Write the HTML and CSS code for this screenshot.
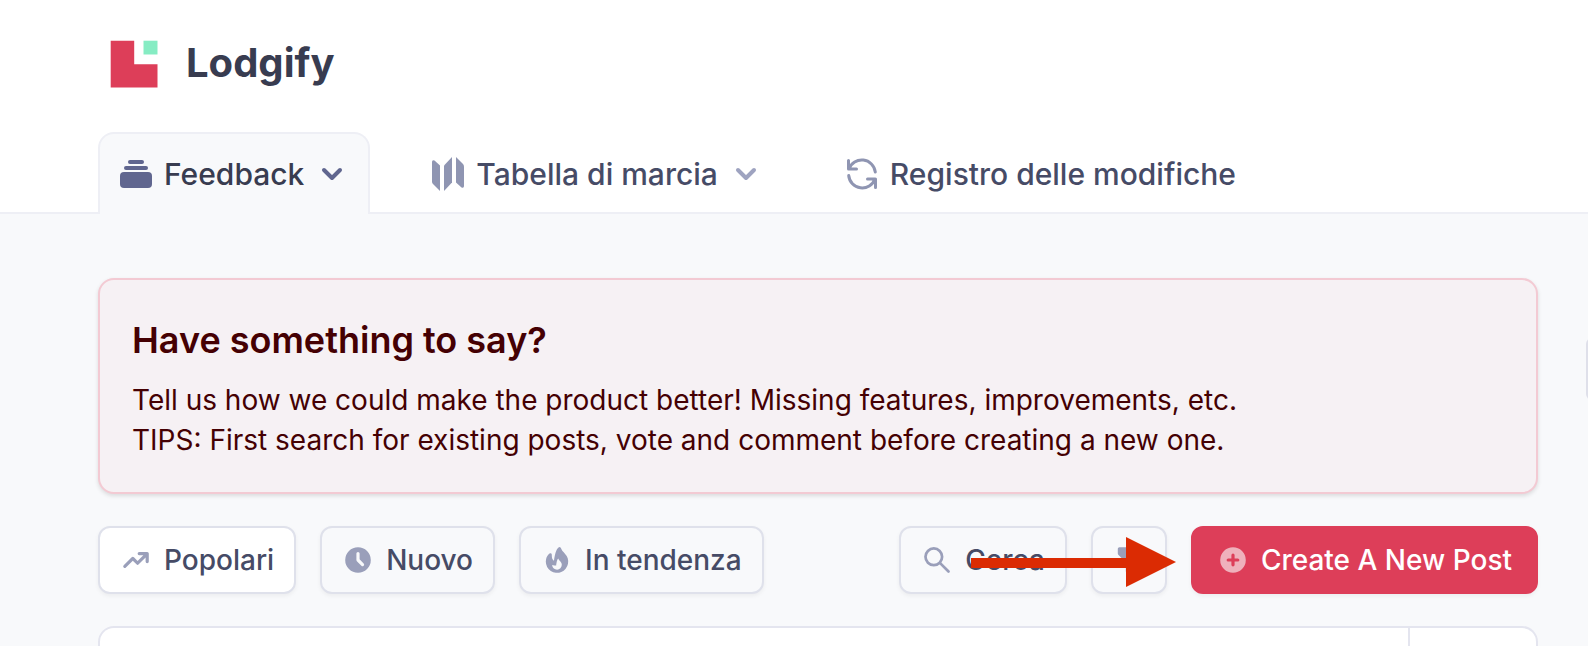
FILE: index.html
```html
<!DOCTYPE html>
<html lang="it">
<head>
    <meta charset="utf-8">
    <meta name="viewport" content="width=device-width, initial-scale=1">
    <link rel="stylesheet" href="styles.css">
    <title>Lodgify Feedback</title>
</head>

<body>
<header class="header">
    <a class="brand" href="#">
        <svg class="logo" viewBox="0 0 48 48" aria-hidden="true">
            <path fill="#dd3e59" d="M.7.7h23.500v23.500h23.300v23.300H.7z"/>
            <path fill="#86ecc3" d="M33.500.7h14v13.800h-14z"/>
        </svg>
        <span>Lodgify</span>
    </a>
    <nav class="tabs">
        <a class="tab active" href="#">
            <svg class="icon" viewBox="0 0 32 32" aria-hidden="true">
                <rect x="8" y="2" width="16" height="4" rx="2"/>
                <rect x="4" y="8" width="24" height="4" rx="2"/>
                <rect x="0" y="14" width="32" height="16" rx="4"/>
            </svg>
            <span>Feedback</span>
            <svg class="icon chevron" viewBox="0 0 32 32" aria-hidden="true"><path d="M8 12l8 8 8-8"/></svg>
        </a>
        <a class="tab" href="#">
            <svg class="icon" viewBox="0 0 32 32" aria-hidden="true">
                <path d="M0 4Q0 1.500 2.500 2.500L8 7.500V33l-7-7q-1-1-1-2.500z"/>
                <path d="M12 7.500l8-8.500v25.500L12 33z"/>
                <path d="M24-1l7 7q1 1 1 2.500V28q0 2.500-2.500 1.500L24 24.500z"/>
            </svg>
            <span>Tabella di marcia</span>
            <svg class="icon chevron" viewBox="0 0 32 32" aria-hidden="true"><path d="M8 12l8 8 8-8"/></svg>
        </a>
        <a class="tab" href="#">
            <svg class="icon line" viewBox="0 0 32 32" aria-hidden="true">
                <path d="M2.500 2.500v8.500h8M3 11A13.600 13.600 0 0 1 29.300 14M29.500 29.500V21h-8M29 21A13.600 13.600 0 0 1 2.700 17.500"/>
            </svg>
            <span>Registro delle modifiche</span>
        </a>
    </nav>
</header>

<main class="content">
    <section class="banner">
        <h1>Have something to say?</h1>
        <p>Tell us how we could make the product better! Missing features, improvements, etc.<br>TIPS: First search for existing posts, vote and comment before creating a new one.</p>
    </section>

    <div class="toolbar">
        <div class="group">
            <button class="btn selected" type="button">
                <svg class="icon" viewBox="0 0 20 20" aria-hidden="true"><path d="M12 7a1 1 0 110-2h5a1 1 0 011 1v5a1 1 0 11-2 0V8.414l-4.293 4.293a1 1 0 01-1.414 0L8 10.414l-4.293 4.293a1 1 0 01-1.414-1.414l5-5a1 1 0 011.414 0L11 10.586 14.586 7H12z"/></svg>
                Popolari
            </button>
            <button class="btn" type="button">
                <svg class="icon" viewBox="0 0 20 20" aria-hidden="true"><path fill-rule="evenodd" d="M10 18a8 8 0 100-16 8 8 0 000 16zm1-12a1 1 0 10-2 0v4a1 1 0 00.293.707l2.828 2.829a1 1 0 101.415-1.415L11 9.586V6z"/></svg>
                Nuovo
            </button>
            <button class="btn" type="button">
                <svg class="icon" viewBox="0 0 20 20" aria-hidden="true"><path fill-rule="evenodd" d="M12.395 2.553a1 1 0 00-1.450-.385c-.345.230-.614.558-.822.880-.214.330-.403.713-.570 1.116-.334.804-.614 1.768-.840 2.734a31.365 31.365 0 00-.613 3.580 2.640 2.640 0 01-.945-1.067c-.328-.680-.398-1.534-.398-2.654A1 1 0 005.050 6.050 6.981 6.981 0 003 11a7 7 0 1011.950-4.950c-.592-.591-.980-.985-1.348-1.467-.363-.476-.724-1.063-1.207-2.030zM12.120 15.120A3 3 0 017 13s.879.500 2.500.500c0-1 .500-4 1.250-4.500.500 1 .786 1.293 1.371 1.879A2.990 2.990 0 0113 13a2.990 2.990 0 01-.879 2.121z"/></svg>
                In tendenza
            </button>
        </div>
        <div class="group">
            <button class="btn" type="button">
                <svg class="icon search" viewBox="0 0 20 20" aria-hidden="true"><circle cx="8" cy="8" r="5.200"/><path d="M11.800 11.800l5.400 5.400"/></svg>
                Cerca
            </button>
            <button class="btn" type="button" aria-label="Filtra">
                <svg class="icon" viewBox="0 0 20 20" aria-hidden="true"><path d="M3 3a1 1 0 011-1h12a1 1 0 011 1v3a1 1 0 01-.293.707L12 11.414V15a1 1 0 01-.293.707l-2 2A1 1 0 018 17v-5.586L3.293 6.707A1 1 0 013 6V3z"/></svg>
            </button>
            <button class="btn create" type="button">
                <svg class="icon" viewBox="0 0 20 20" aria-hidden="true"><path fill-rule="evenodd" d="M10 18a8 8 0 100-16 8 8 0 000 16zm1-11a1 1 0 10-2 0v2H7a1 1 0 100 2h2v2a1 1 0 102 0v-2h2a1 1 0 100-2h-2V7z"/></svg>
                Create A New Post
            </button>
            <!-- arrow pointing at the create button -->
            <svg class="arrow" viewBox="0 0 206 50" aria-hidden="true"><path d="M0 21h155V0l50 25-50 25V31H0z"/></svg>
        </div>
    </div>

    <section class="posts">
        <div class="post"></div>
        <div class="votes"></div>
    </section>
</main>
<div class="handle"></div>
</body>
</html>
```
FILE: styles.css
```css
* {
    box-sizing: border-box;
}
body {
    display: flex;
    flex-direction: column;
    margin: 0;
    height: 100vh;
    overflow: hidden;
    background: #f8f9fb;
    color: #464b66;
    font-family: Inter, "Liberation Sans", sans-serif;
    font-size: 28px;
}

.header {
    padding: 40px 50px 0 98px;
    background: #fff;
    border-bottom: 2px solid #eeeff5;
}
.brand {
    display: flex;
    align-items: center;
    gap: 28px;
    padding-left: 12px;
    color: #383c50;
    font-size: 40px;
    line-height: 46px;
    font-weight: 700;
    text-decoration: none;
}
.brand span {
    padding-bottom: 2px;
}
.logo {
    width: 48px;
    height: 48px;
}
.tabs {
    display: flex;
    gap: 40px;
    margin-top: 44px;
    margin-bottom: -2px;
}
.tab {
    display: flex;
    align-items: center;
    gap: 12px;
    height: 82px;
    padding: 0 20px;
    border: 2px solid transparent;
    border-bottom: none;
    border-radius: 16px 16px 0 0;
    color: #464b66;
    font-size: 30px;
    font-weight: 500;
    text-decoration: none;
    white-space: nowrap;
}
.tab.active {
    background: #f8f9fb;
    border-color: #eeeff5;
    color: #383c50;
}

.icon {
    flex: none;
    width: 32px;
    height: 32px;
    fill: #9a9fba;
    overflow: visible;
}
.tab .icon {
    fill: #8f95b2;
}
.tab.active .icon {
    fill: #60668f;
}
.tab .chevron {
    fill: none;
    stroke: #9ea3c0;
    stroke-width: 4;
    stroke-linecap: round;
    stroke-linejoin: round;
}
.tab.active .chevron {
    fill: none;
    stroke: #60668f;
}
.tab .line {
    fill: none;
    stroke: #8f95b2;
    stroke-width: 3;
    stroke-linecap: round;
    stroke-linejoin: round;
}
.icon.search {
    fill: none;
    stroke: #9a9fba;
    stroke-width: 1.7;
    stroke-linecap: round;
}

.content {
    display: flex;
    flex: 1;
    flex-direction: column;
    padding: 64px 50px 0 98px;
}
.banner {
    padding: 38px 32px 32px;
    background: #f6f1f4;
    border: 2px solid #f3cad3;
    border-radius: 16px;
    box-shadow: 0 2px 4px rgba(0, 0, 0, 0.12);
    color: #450003;
}
.banner h1 {
    margin: 0 0 18px;
    font-size: 36px;
    line-height: 44px;
    font-weight: 600;
}
.banner p {
    margin: 0;
    line-height: 40px;
}

.toolbar {
    display: flex;
    justify-content: space-between;
    margin: 32px 0;
}
.group {
    position: relative;
    display: flex;
    gap: 24px;
}
.btn {
    display: flex;
    align-items: center;
    gap: 12px;
    height: 68px;
    padding: 0 20px;
    background: #f8f9fb;
    border: 2px solid #dfe1eb;
    border-radius: 12px;
    box-shadow: 0 2px 4px rgba(0, 0, 0, 0.05);
    color: #464b66;
    font-family: inherit;
    font-size: 28px;
    font-weight: 500;
    white-space: nowrap;
    cursor: pointer;
}
.btn.selected {
    background: #fff;
}
.btn.create {
    padding: 0 24px;
    background: #dd3e59;
    border-color: #dd3e59;
    color: #fff;
}
.btn.create .icon {
    fill: #efb1bc;
}
.arrow {
    position: absolute;
    top: 11px;
    right: 361px;
    width: 206px;
    height: 50px;
    fill: #db2b03;
}

/* list runs on below the fold */
.posts {
    display: flex;
    flex: 1;
    background: #fff;
    border: 2px solid #e4e5ef;
    border-bottom: none;
    border-radius: 16px 16px 0 0;
}
.post {
    flex: 1;
}
.votes {
    width: 128px;
    border-left: 2px solid #e4e5ef;
}

/* side handle, mostly off screen */
.handle {
    position: fixed;
    top: 338px;
    right: -10px;
    width: 12px;
    height: 62px;
    background: #dfe0ea;
    border-radius: 8px;
}
```
